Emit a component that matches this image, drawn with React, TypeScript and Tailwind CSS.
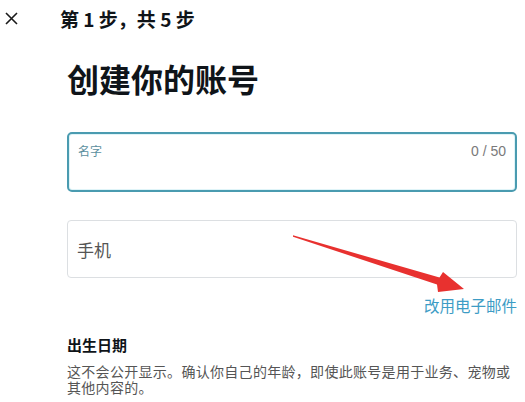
export default function App() {
  return (
    <div className="relative h-[402px] w-[525px] overflow-hidden bg-white font-['Noto_Sans_CJK_SC','Noto_Sans',sans-serif] text-[#0f1419]">
      {/* Header */}
      <div className="flex h-[36px] items-center pl-[5px]">
        <svg width="13" height="13" viewBox="0 0 13 13" className="mt-[1px]">
          <path d="M1 1 L12 12 M12 1 L1 12" stroke="#1a1a1a" strokeWidth="1.6" fill="none" />
        </svg>
        <span className="ml-[42px] text-[19px] font-bold leading-none">第 1 步，共 5 步</span>
      </div>

      <div className="ml-[67px] mr-[8px]">
        <h1 className="mt-[26px] text-[32px] font-bold leading-none">创建你的账号</h1>

        {/* Name field */}
        <div className="mt-[38px] h-[60px] rounded-[5px] border-2 border-[#4a9bb0] px-[9px] pt-[9px] shadow-[inset_0_0_0_1px_#dff4f8]">
          <div className="flex items-center justify-between">
            <span className="text-[12px] leading-[16px] text-[#5b8f9e]">名字</span>
            <span className="font-['Liberation_Sans',sans-serif] text-[14px] leading-[16px] text-[#7a7a7a]">0 / 50</span>
          </div>
        </div>

        {/* Phone field */}
        <div className="mt-[28px] flex h-[58px] items-center rounded-[4px] border border-[#dcdfe2] px-[9px]">
          <span className="text-[17px] leading-none text-[#555]">手机</span>
        </div>

        <div className="mt-[16px] flex h-[22px] items-center justify-end">
          <span className="text-[15.5px] leading-[22px] text-[#3d9cc5]">改用电子邮件</span>
        </div>

        {/* Birthday */}
        <div className="mt-[19px] h-[20px] text-[15px] font-bold leading-[20px]">出生日期</div>
        <div className="mt-[8px] text-[14px] leading-[16px] tracking-[0.3px] text-[#555]">
          这不会公开显示。确认你自己的年龄，即使此账号是用于业务、宠物或其他内容的。
        </div>
      </div>

      {/* Annotation arrow */}
      <svg className="pointer-events-none absolute inset-0" width="525" height="402">
        <polygon
          points="293,235.2 439.5,277.6 443,272 464,289 438,292 437,284.4 293,236.8"
          fill="#e8312f"
        />
      </svg>
    </div>
  )
}
